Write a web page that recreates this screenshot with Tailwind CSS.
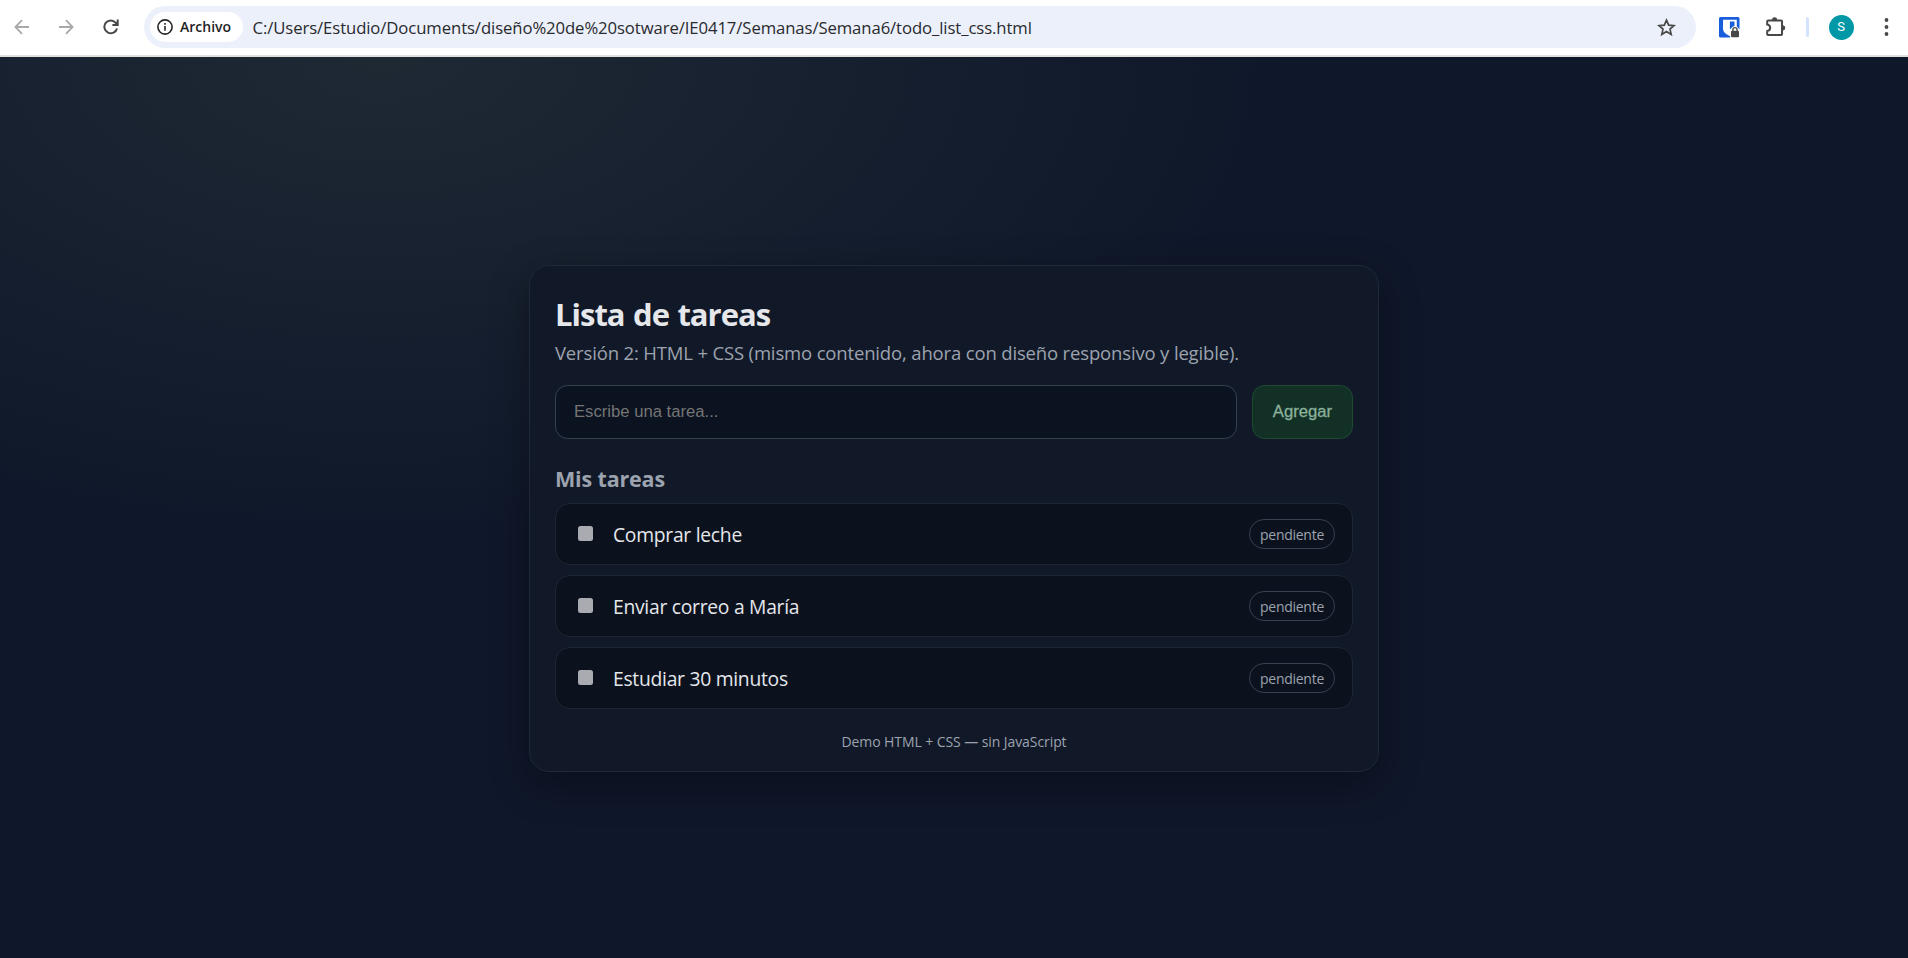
<!DOCTYPE html>
<html lang="es">
<head>
<meta charset="utf-8">
<title>Lista de tareas</title>
<script src="https://cdn.jsdelivr.net/npm/@tailwindcss/browser@4"></script>
</head>
<body class="flex h-screen flex-col overflow-hidden bg-[#0f172a] font-['Open_Sans',sans-serif]">

<!-- Browser toolbar -->
<header class="flex h-[57px] shrink-0 border-b-2 border-[#dfe1dc] bg-white pt-[6px]">
  <div class="flex h-[42px] w-[144px] shrink-0 items-center pl-[14px]">
    <svg class="h-4 w-4" viewBox="0 0 16 16" fill="none" stroke="#a9a9a9" stroke-width="1.8"><path d="M15 8H1.6M8 1.2 1.4 8 8 14.8"/></svg>
    <svg class="ml-[28px] h-4 w-4" viewBox="0 0 16 16" fill="none" stroke="#a9a9a9" stroke-width="1.8"><path d="M1 8h13.4M8 1.2 14.6 8 8 14.8"/></svg>
    <svg class="ml-[29px] h-4 w-4" viewBox="0 0 16 16" fill="none" stroke="#474747" stroke-width="2"><path d="M14 9.4A6.4 6.4 0 1 1 12.7 3.8L14.4 5.6M14.7.6v5.3H9.4"/></svg>
  </div>
  <div class="flex h-[42px] w-[1552px] shrink-0 items-center rounded-full bg-[#ecf0fa] pl-[6px] pr-[20px]">
    <div class="flex h-[30px] w-[93px] items-center rounded-full bg-white pl-[7px]">
      <svg class="h-4 w-4" viewBox="0 0 16 16" fill="none" stroke="#262626" stroke-width="1.6"><circle cx="8" cy="8" r="7.1"/><path d="M8 7v4.8M8 4v1.8"/></svg>
      <span class="ml-[7px] text-[14px] font-semibold leading-5 text-[#1f1f1f]">Archivo</span>
    </div>
    <span class="ml-[9.5px] whitespace-nowrap pt-px text-[16.7px] leading-6 tracking-[-0.09px] text-[#282a2e]">C:/Users/Estudio/Documents/diseño%20de%20sotware/IE0417/Semanas/Semana6/todo_list_css.html</span>
    <svg class="ml-auto h-[19px] w-[19px]" viewBox="0 0 19 19" fill="none" stroke="#474747" stroke-width="1.7"><path d="m9.5 2.2 2.2 4.9 5.3.5-4 3.5 1.2 5.3-4.7-2.8-4.7 2.8L6 11.1 2 7.6l5.3-.5z"/></svg>
  </div>
  <div class="flex h-[42px] flex-1 items-center pl-[23px]">
    <svg class="h-[21px] w-[21px]" viewBox="0 0 21 21"><rect width="20.5" height="20.5" rx="1.5" fill="#175ddc"/><path d="M4 2.7h13.8v9c0 3.5-3.6 6-6.9 7.2C7.600 17.700 4 15.200 4 11.700z" fill="#fff"/><path d="M10.900 4.400h4.600v5.400h-1.400l-3.200 2.700z" fill="#175ddc"/><path d="M11 21v-8.400l1.300-1a3.900 3.900 0 0 1 7.400 0L21 12.600V21z" fill="#fff"/><rect x="12" y="13.700" width="8" height="6.600" rx="1" fill="#474747"/><path d="M13.900 14v-1.300a2.100 2.100 0 0 1 4.200 0V14" fill="none" stroke="#474747" stroke-width="1.400"/></svg>
    <svg class="ml-[25px] h-[22px] w-[22px]" viewBox="0 0 22 22"><path d="M3.1 4.500H16.200Q17 4.500 17 5.300V18.300Q17 19.100 16.200 19.100H3.100Q2.200 19.100 2.200 18.300V15.100C6.200 14.400 6.200 9.200 2.200 8.500V5.300Q2.200 4.500 3.100 4.500Z" fill="none" stroke="#474747" stroke-width="2"/><path d="M7 3.900a2.600 2.600 0 0 1 5.200 0zM17.600 9.200a2.600 2.600 0 0 1 0 5.200z" fill="#474747"/></svg>
    <div class="ml-[18.5px] h-5 w-[3px] rounded-full bg-[#d3e3fd]"></div>
    <div class="ml-5 flex h-[25px] w-[25px] items-center justify-center rounded-full bg-[#0097a7] font-['Roboto',sans-serif] text-[13px] text-white">S</div>
    <svg class="ml-[30px] h-[18px] w-[5px]" viewBox="0 0 5 18" fill="#474747"><circle cx="2.5" cy="2" r="1.9"/><circle cx="2.5" cy="9" r="1.9"/><circle cx="2.5" cy="16" r="1.9"/></svg>
  </div>
</header>

<!-- Page -->
<main class="flex flex-1 justify-center bg-[radial-gradient(1500px_800px_at_20%_0%,#1f2934_0%,#0f172a_60%)] pt-[208px]">
  <section class="h-[507px] w-[850px] rounded-[20px] border border-[#1f2937] bg-[#111827] px-[25px] pt-[25px] shadow-[0_12px_38px_rgba(0,0,0,0.35)]">
    <h1 class="text-[31px] font-bold leading-[46px] tracking-[-1px] text-[#e5e7eb] [word-spacing:1.4px]">Lista de tareas</h1>
    <p class="mt-px whitespace-nowrap text-[18.5px] leading-[30px] tracking-[-0.157px] text-[#9ca3af]">Versión 2: HTML + CSS (mismo contenido, ahora con diseño responsivo y legible).</p>

    <form class="mt-[17px] flex gap-[15px] font-['Liberation_Sans',Arial,sans-serif] text-[16.67px]">
      <input type="text" placeholder="Escribe una tarea..." class="h-[54px] min-w-0 flex-1 rounded-[12.5px] border border-[#374151] bg-[#0b1220] px-[18px] placeholder:text-[#757575]" disabled>
      <button type="button" disabled class="h-[54px] w-[101px] rounded-[12.5px] border border-[#1d4a30] bg-[#123026] pb-[2px] text-[#8bb29c] [-webkit-text-stroke:0.3px_#8bb29c]">Agregar</button>
    </form>

    <h2 class="mt-[25px] text-[21.5px] font-bold leading-[30px] tracking-[-0.16px] text-[#9ca3af]">Mis tareas</h2>

    <ul class="mt-[9px] flex flex-col gap-[10px] text-[19.3px] tracking-[-0.27px] text-[#e5e7eb]">
      <li class="flex h-[62px] items-center rounded-[15px] border border-[#1c2733] bg-[#0b121e] pl-[22px] pr-[17px]">
        <span class="mb-[2px] h-[15px] w-[15px] rounded-[2.5px] bg-[#a9abb0]"></span>
        <span class="ml-5 pt-[2px]">Comprar leche</span>
        <span class="ml-auto flex h-[30px] w-[86px] items-center justify-center rounded-full border border-[#374151] pt-[2px] text-[14px] leading-5 text-[#9ca3af]">pendiente</span>
      </li>
      <li class="flex h-[62px] items-center rounded-[15px] border border-[#1c2733] bg-[#0b121e] pl-[22px] pr-[17px]">
        <span class="mb-[2px] h-[15px] w-[15px] rounded-[2.5px] bg-[#a9abb0]"></span>
        <span class="ml-5 pt-[2px]">Enviar correo a María</span>
        <span class="ml-auto flex h-[30px] w-[86px] items-center justify-center rounded-full border border-[#374151] pt-[2px] text-[14px] leading-5 text-[#9ca3af]">pendiente</span>
      </li>
      <li class="flex h-[62px] items-center rounded-[15px] border border-[#1c2733] bg-[#0b121e] pl-[22px] pr-[17px]">
        <span class="mb-[2px] h-[15px] w-[15px] rounded-[2.5px] bg-[#a9abb0]"></span>
        <span class="ml-5 pt-[2px]">Estudiar 30 minutos</span>
        <span class="ml-auto flex h-[30px] w-[86px] items-center justify-center rounded-full border border-[#374151] pt-[2px] text-[14px] leading-5 text-[#9ca3af]">pendiente</span>
      </li>
    </ul>

    <footer class="mt-[22px] text-center text-[14px] leading-[22px] tracking-[-0.08px] text-[#9ca3af]">Demo HTML + CSS — sin JavaScript</footer>
  </section>
</main>
</body>
</html>
